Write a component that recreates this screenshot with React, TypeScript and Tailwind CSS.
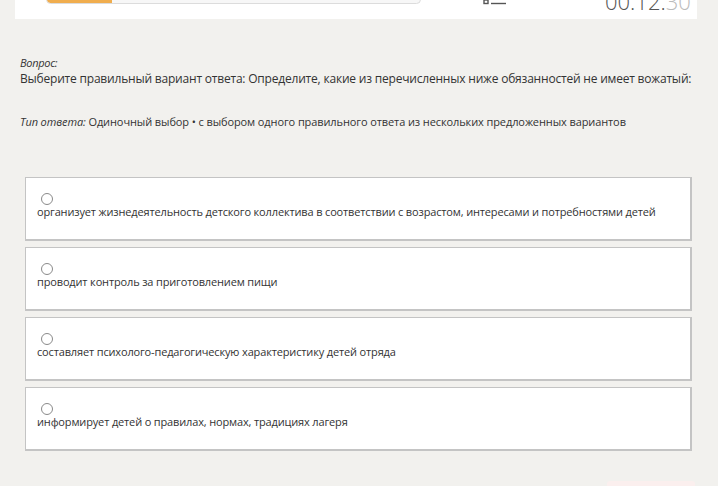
import React from "react";

const options = [
  "организует жизнедеятельность детского коллектива в соответствии с возрастом, интересами и потребностями детей",
  "проводит контроль за приготовлением пищи",
  "составляет психолого-педагогическую характеристику детей отряда",
  "информирует детей о правилах, нормах, традициях лагеря",
];

function ListIcon() {
  return (
    <svg width="24" height="22" viewBox="0 0 24 22" fill="none" stroke="#555" strokeWidth="1.4">
      <rect x="1" y="3" width="4" height="4" />
      <line x1="8" y1="5" x2="23" y2="5" />
      <rect x="1" y="10" width="4" height="4" />
      <line x1="8" y1="12" x2="23" y2="12" />
      <rect x="1" y="17" width="4" height="3.5" />
      <line x1="8" y1="20.5" x2="23" y2="20.5" />
    </svg>
  );
}

export default function App() {
  return (
    <div
      className="w-[718px] h-[486px] overflow-hidden bg-[#f2f1ee] text-[#333]"
      style={{ fontFamily: '"Open Sans", "Noto Sans", sans-serif' }}
    >
      {/* header card with progress and timer (scrolled partly out of view) */}
      <div className="ml-[15px] w-[682px] h-[80px] -mt-[61px] bg-white flex items-end pl-[31px] pb-[15px]">
        <div className="shrink-0 w-[375px] h-[9px] rounded-full border border-[#dcdcdc] bg-[#f7f7f7] overflow-hidden">
          <div className="w-[65px] h-full bg-[#f0ad4e] rounded-l-full" />
        </div>
        <div className="shrink-0 ml-[62px] mb-[-1px]">
          <ListIcon />
        </div>
        <div className="shrink-0 ml-[98px] mb-[-14px] text-[22px] leading-[34px] text-[#555] font-light">
          00:12:<span className="text-[#bbb]">30</span>
        </div>
      </div>

      {/* question */}
      <div className="px-[20px] pt-[37px]">
        <div className="text-[11px] italic leading-[14px] tracking-[-0.3px]">Вопрос:</div>
        <div className="text-[12px] leading-[18px] tracking-[-0.2px] whitespace-nowrap">
          Выберите правильный вариант ответа: Определите, какие из перечисленных ниже обязанностей не имеет вожатый:
        </div>
        <div className="mt-[26px] text-[11px] leading-[16px] tracking-[-0.1px] whitespace-nowrap">
          <span className="italic">Тип ответа:</span> Одиночный выбор • с выбором одного правильного ответа из нескольких предложенных вариантов
        </div>
      </div>

      {/* answer options */}
      <div className="mt-[47px] ml-[25px] w-[667px] flex flex-col gap-[6px]">
        {options.map((text) => (
          <label
            key={text}
            className="h-[64px] bg-white border border-[#c4c4c4] border-b-2 border-r-2 pl-[11px] pt-[15px] block"
          >
            <span className="block ml-[4px] w-[12px] h-[12px] rounded-full border border-[#8a8a8a] bg-white" />
            <span className="block text-[11px] leading-[14px] tracking-[-0.15px]">{text}</span>
          </label>
        ))}
      </div>

      {/* footer buttons edge */}
      <div className="mt-[30px] ml-[607px] w-[88px] h-[10px] bg-[#fbefee] rounded-t-[3px]" />
    </div>
  );
}
